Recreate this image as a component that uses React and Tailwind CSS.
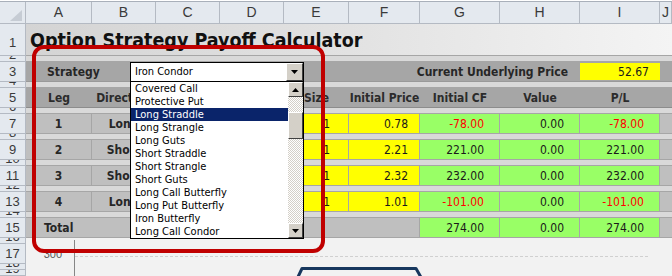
import React from 'react';

const sheetFont = "font-['DejaVu_Sans_Condensed','DejaVu_Sans',sans-serif]";
const headFont = "font-['Liberation_Sans',Arial,sans-serif]";

// column widths, right gridline included
const COLS = [
  ['A', 'w-[66px]'],
  ['B', 'w-[64px]'],
  ['C', 'w-[64px]'],
  ['D', 'w-[64px]'],
  ['E', 'w-[65px]'],
  ['F', 'w-[71px]'],
  ['G', 'w-[80px]'],
  ['H', 'w-[80px]'],
  ['I', 'w-[80px]'],
  ['J', 'w-[12px]'],
];

const legs = [
  { row: 7, leg: 1, dir: 'Long', size: 1, price: '0.78', cf: '-78.00', value: '0.00', pl: '-78.00' },
  { row: 9, leg: 2, dir: 'Short', size: 1, price: '2.21', cf: '221.00', value: '0.00', pl: '221.00' },
  { row: 11, leg: 3, dir: 'Short', size: 1, price: '2.32', cf: '232.00', value: '0.00', pl: '232.00' },
  { row: 13, leg: 4, dir: 'Long', size: 1, price: '1.01', cf: '-101.00', value: '0.00', pl: '-101.00' },
];

const strategies = [
  'Covered Call',
  'Protective Put',
  'Long Straddle',
  'Long Strangle',
  'Long Guts',
  'Short Straddle',
  'Short Strangle',
  'Short Guts',
  'Long Call Butterfly',
  'Long Put Butterfly',
  'Iron Butterfly',
  'Long Call Condor',
];

function RowHead({ n, small }) {
  if (small) {
    return (
      <div className={`w-[26px] h-[6px] shrink-0 bg-[#e4e9ef] border-r border-b border-[#b4bac3] flex justify-center overflow-hidden ${headFont} text-[13px] text-[#3a3a3a]`}>
        <span className="leading-none -mt-[8px]">{n}</span>
      </div>
    );
  }
  return (
    <div className={`w-[26px] shrink-0 bg-[#e4e9ef] border-r border-b border-[#b4bac3] flex items-center justify-center ${headFont} text-[13px] text-[#3a3a3a]`}>
      {n}
    </div>
  );
}

function SpacerRow({ n }) {
  return (
    <div className="flex h-[6px]">
      <RowHead n={n} small />
      <div className="flex-1 bg-[#d9d9d9] border-b border-[#a6a6a6]" />
    </div>
  );
}

function Num({ children, className = '' }) {
  const neg = String(children).startsWith('-');
  return (
    <div className={`h-full border-r border-[#a6a6a6] flex items-center justify-end text-[12px] ${neg ? 'text-[#ff0000]' : 'text-[#1a1a1a]'} ${className}`}>
      {children}
    </div>
  );
}

function LegRow({ d }) {
  return (
    <>
      <div className="flex h-[20px]">
        <RowHead n={d.row} />
        <div className="flex flex-1 border-b border-[#a6a6a6] font-bold text-[12px] text-[#262626]">
          <div className="w-[66px] bg-[#bfbfbf] border-r border-[#a6a6a6] flex items-center justify-center">{d.leg}</div>
          <div className="w-[64px] bg-[#bfbfbf] border-r border-[#a6a6a6] flex items-center justify-center">{d.dir}</div>
          {/* C and D sit under the open list */}
          <div className="w-[64px] bg-[#bfbfbf] border-r border-[#a6a6a6]" />
          <div className="w-[64px] bg-[#ffff00] border-r border-[#a6a6a6]" />
          <Num className="w-[65px] bg-[#ffff00] pr-[18px] font-normal">{d.size}</Num>
          <Num className="w-[71px] bg-[#ffff00] pr-[11px] font-normal">{d.price}</Num>
          <Num className="w-[80px] bg-[#99ff66] pr-[15px] font-normal">{d.cf}</Num>
          <Num className="w-[80px] bg-[#99ff66] pr-[15px] font-normal">{d.value}</Num>
          <Num className="w-[80px] bg-[#99ff66] pr-[15px] font-normal">{d.pl}</Num>
          <div className="w-[12px] bg-[#bfbfbf]" />
        </div>
      </div>
      <SpacerRow n={d.row + 1} />
    </>
  );
}

function ScrollButton({ up }) {
  return (
    <div className="h-[15px] bg-[#d4d0c8] border border-t-white border-l-white border-r-[#404040] border-b-[#404040] flex items-center justify-center">
      <svg width="7" height="4" viewBox="0 0 7 4">
        {up ? <polygon points="3.5,0 7,4 0,4" fill="#000" /> : <polygon points="0,0 7,0 3.5,4" fill="#000" />}
      </svg>
    </div>
  );
}

function StrategyDropdown() {
  return (
    <>
      <div className="absolute left-[130px] top-[62px] w-[174px] h-[20px] bg-white border border-black flex items-center">
        <span className="flex-1 pl-[4px] text-[11px] text-black">Iron Condor</span>
        <div className="w-[17px] h-full bg-[#d4d0c8] border border-t-white border-l-white border-r-[#404040] border-b-[#404040] flex items-center justify-center">
          <svg width="7" height="4" viewBox="0 0 7 4">
            <polygon points="0,0 7,0 3.5,4" fill="#000" />
          </svg>
        </div>
      </div>
      <div className="absolute left-[130px] top-[81px] w-[174px] h-[158px] bg-white border border-black flex">
        <div className="flex-1 flex flex-col">
          {strategies.map((s) => (
            <div
              key={s}
              className={`h-[13px] pl-[4px] flex items-center text-[11px] leading-none ${s === 'Long Straddle' ? 'bg-[#0a246a] text-white' : 'text-black'}`}
            >
              {s}
            </div>
          ))}
        </div>
        <div className="w-[15px] flex flex-col">
          <ScrollButton up />
          <div className="h-[15px] bg-[repeating-conic-gradient(#d4d0c8_0_25%,#ffffff_0_50%)] bg-[length:2px_2px]" />
          <div className="h-[27px] bg-[#d4d0c8] border border-t-white border-l-white border-r-[#404040] border-b-[#404040]" />
          <div className="flex-1 bg-[repeating-conic-gradient(#d4d0c8_0_25%,#ffffff_0_50%)] bg-[length:2px_2px]" />
          <ScrollButton />
        </div>
      </div>
    </>
  );
}

export default function App() {
  return (
    <div className={`relative w-[672px] h-[276px] overflow-hidden bg-white ${sheetFont}`}>
      <div className="h-px bg-white" />
      <div className="h-px bg-[#a9b0ba]" />

      {/* column letters */}
      <div className={`flex h-[22px] bg-[#e4e9ef] border-b border-[#b4bac3] ${headFont} text-[14px] text-[#3a3a3a]`}>
        <div className="w-[26px] shrink-0 border-r border-[#b4bac3] flex items-end justify-end pr-[3px] pb-[2px]">
          <svg width="12" height="11" viewBox="0 0 12 11">
            <polygon points="12,0 12,11 0,11" fill="#c6ccd4" />
          </svg>
        </div>
        {COLS.map(([l, w]) => (
          <div key={l} className={`${w} shrink-0 border-r border-[#b4bac3] flex items-center justify-center`}>
            {l}
          </div>
        ))}
      </div>

      {/* title row */}
      <div className="flex h-[32px]">
        <div className={`w-[26px] shrink-0 bg-[#e4e9ef] border-r border-b border-[#b4bac3] flex items-end justify-center pb-[3px] ${headFont} text-[13px] text-[#3a3a3a]`}>
          1
        </div>
        <div className="flex-1 min-w-0 overflow-hidden bg-gradient-to-r from-[#d4d4d4] via-[#e2e2e2] to-[#f4f4f4] border-b border-[#a6a6a6] pl-[4px] pt-[7px]">
          <div className="text-[19.5px] leading-none font-bold text-[#111] whitespace-nowrap">Option Strategy Payoff Calculator</div>
        </div>
      </div>
      <SpacerRow n={2} />

      {/* strategy row */}
      <div className="flex h-[20px]">
        <RowHead n={3} />
        <div className="flex flex-1 bg-[#a6a6a6] border-b border-[#999] font-bold text-[12px] text-[#262626]">
          <div className="w-[130px] flex items-center pl-[21px]">Strategy</div>
          <div className="w-[424px] flex items-center justify-end pr-[12px]">Current Underlying Price</div>
          <div className="w-[80px] my-px bg-[#ffff00] flex items-center justify-end pr-[11px] font-normal text-[#1a1a1a]">52.67</div>
          <div className="w-[12px]" />
        </div>
      </div>
      <SpacerRow n={4} />

      {/* header row */}
      <div className="flex h-[20px]">
        <RowHead n={5} />
        <div className="flex flex-1 bg-[#a6a6a6] border-b border-[#8c8c8c] font-bold text-[12px] text-[#2b2b2b]">
          <div className="w-[66px] flex items-center justify-center">Leg</div>
          <div className="w-[64px] flex items-center justify-center">Direction</div>
          <div className="w-[128px]" />
          <div className="w-[65px] flex items-center justify-center">Size</div>
          <div className="w-[71px] flex items-center justify-center whitespace-nowrap">Initial Price</div>
          <div className="w-[80px] flex items-center justify-center">Initial CF</div>
          <div className="w-[80px] flex items-center justify-center">Value</div>
          <div className="w-[80px] flex items-center justify-center">P/L</div>
          <div className="w-[12px]" />
        </div>
      </div>
      <SpacerRow n={6} />

      {legs.map((d) => (
        <LegRow key={d.row} d={d} />
      ))}

      {/* total row */}
      <div className="flex h-[20px]">
        <RowHead n={15} />
        <div className="flex flex-1 border-b border-[#a6a6a6] text-[12px]">
          <div className="w-[394px] bg-[#bfbfbf] border-r border-[#a6a6a6] flex items-center pl-[18px] font-bold text-[#262626]">Total</div>
          <Num className="w-[80px] bg-[#99ff66] pr-[15px]">274.00</Num>
          <Num className="w-[80px] bg-[#99ff66] pr-[15px]">0.00</Num>
          <Num className="w-[80px] bg-[#99ff66] pr-[15px]">274.00</Num>
          <div className="w-[12px] bg-[#bfbfbf]" />
        </div>
      </div>

      {/* chart below the table */}
      <div className="flex h-[38px]">
        <div className="flex flex-col shrink-0">
          <RowHead n={16} small />
          <div className="h-[20px] flex">
            <RowHead n={17} />
          </div>
          <RowHead n={18} small />
          <RowHead n={19} small />
        </div>
        <div className="relative flex-1 bg-[#f2f2f2]">
          <span className={`absolute right-[610px] top-[11px] text-[11px] leading-none text-[#595959] ${headFont}`}>300</span>
          <svg className="absolute left-0 top-0" width="646" height="38" viewBox="0 0 646 38">
            <line x1="48.5" y1="2" x2="48.5" y2="38" stroke="#868686" strokeWidth="1" />
            <line x1="49" y1="18.5" x2="622" y2="18.5" stroke="#d0d0d0" strokeWidth="1" strokeDasharray="3 2" />
            <polyline points="271,41 276,30.5 390,30.5 396,41" fill="none" stroke="#17375e" strokeWidth="3" strokeLinejoin="round" />
          </svg>
        </div>
      </div>

      <StrategyDropdown />

      {/* red highlight frame */}
      <div className="absolute left-[32px] top-[45px] w-[293px] h-[208px] border-4 border-[#c00000] rounded-[12px]" />
    </div>
  );
}
